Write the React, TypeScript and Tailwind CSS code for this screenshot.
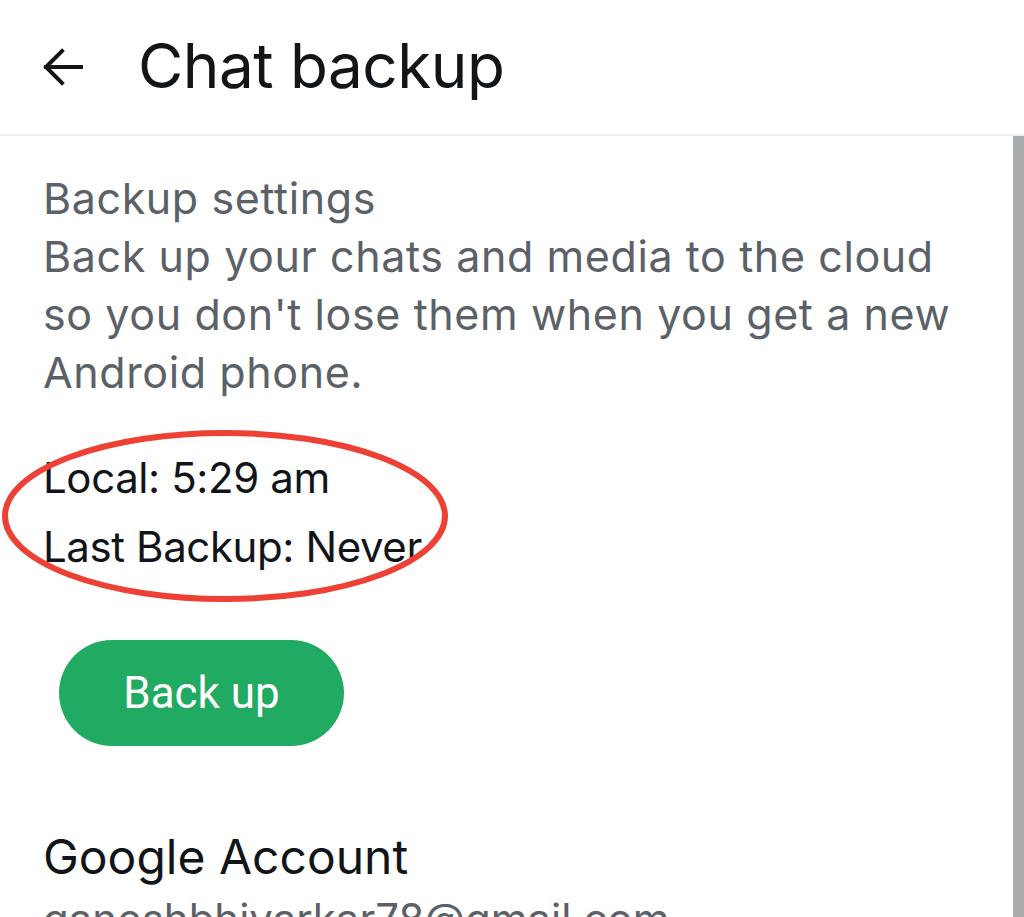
import React from 'react';

const FONT = "font-['Inter','Liberation_Sans',sans-serif]";

// Back arrow drawn to match the thin Material-style glyph
const BackArrow = () => (
  <svg width="44" height="44" viewBox="0 0 44 44" fill="none" stroke="#111518" strokeWidth="4" strokeLinecap="square">
    <path d="M40 22H5" />
    <path d="M21 6L5 22l16 16" />
  </svg>
);

export default function App() {
  return (
    <div className={`w-[1024px] h-[917px] overflow-hidden bg-white ${FONT}`}>
      {/* Header */}
      <div className="h-[136px] flex items-center border-b-2 border-[#f1f1f1]">
        <div className="pl-[41px] w-[138px] flex items-center">
          <BackArrow />
        </div>
        <h1 className="text-[62px] leading-none text-[#111518] tracking-[-0.5px] pb-[2px]">Chat backup</h1>
      </div>

      <div className="flex h-[781px]">
        <div className="flex-1 pl-[43px] pt-[33px]">
          <div className="text-[43px] leading-[58px] text-[#5b6166] tracking-[0.6px]">
            <div>Backup settings</div>
            <p>
              Back up your chats and media to the cloud
              <br />
              so you don't lose them when you get a new
              <br />
              Android phone.
            </p>
          </div>

          <div className="relative mt-[42px] text-[42px] leading-[69px] text-[#111518] tracking-[-0.4px]">
            <div>Local: 5:29 am</div>
            <div>Last Backup: Never</div>
            <svg className="absolute left-[-42px] top-[-14px]" width="448" height="175" viewBox="0 0 448 175" fill="none">
              <ellipse cx="224" cy="87" rx="220" ry="83" stroke="#ee4136" strokeWidth="6" />
            </svg>
          </div>

          <button
            type="button"
            className="mt-[59px] ml-[16px] w-[285px] h-[106px] rounded-full bg-[#21ab62] text-white text-[44px] font-['Roboto',sans-serif]"
          >
            Back up
          </button>

          <div className="mt-[82px] text-[48px] leading-[58px] text-[#111518]">Google Account</div>
          <div className="text-[42px] leading-[66px] text-[#5b6166]">ganeshbhivarkar78@gmail.com</div>
        </div>
        {/* Scrollbar */}
        <div className="w-[11px] bg-[#a9acae]" />
      </div>
    </div>
  );
}
